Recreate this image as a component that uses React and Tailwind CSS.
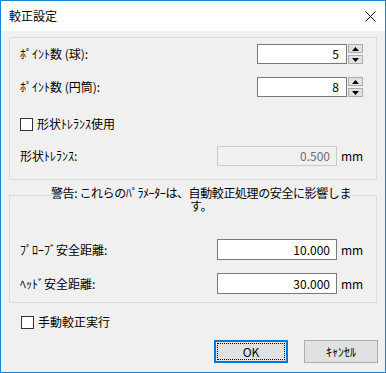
import React from "react";

const font = { fontFamily: '"Noto Sans CJK JP", "Noto Sans", sans-serif' };

const Spinner = ({ value }) => (
  <div className="flex items-center gap-[1px] mr-[13px]">
    <div className="w-[90px] h-[20px] bg-white border border-[#7a7a7a] flex items-center justify-end pr-[7px] text-[12px] text-black">
      {value}
    </div>
    <div className="flex flex-col gap-[2px]">
      <div className="w-[15px] h-[9px] bg-[#e1e1e1] border border-[#adadad] flex items-center justify-center">
        <svg width="7" height="4" viewBox="0 0 7 4"><path d="M0 4h7L3.5 0z" fill="#000" /></svg>
      </div>
      <div className="w-[15px] h-[9px] bg-[#e1e1e1] border border-[#adadad] flex items-center justify-center">
        <svg width="7" height="4" viewBox="0 0 7 4"><path d="M0 0h7L3.5 4z" fill="#000" /></svg>
      </div>
    </div>
  </div>
);

const MmField = ({ value, disabled }) => (
  <div className="flex items-center mr-[15px]">
    <div
      className={
        disabled
          ? "w-[120px] h-[20px] bg-[#f0f0f0] border border-[#cccccc] flex items-center justify-end pr-[6px] text-[12px] text-[#6d6d6d]"
          : "w-[120px] h-[21px] bg-white border border-[#7a7a7a] flex items-center justify-end pr-[6px] text-[12px] text-black"
      }
    >
      {value}
    </div>
    <span className="w-[24px] pl-[4px] text-[12px] text-black">mm</span>
  </div>
);

const Check = ({ label }) => (
  <div className="flex items-center gap-[4px]">
    <div className="w-[13px] h-[13px] bg-white border border-[#333333]" />
    <span className="text-[12px] text-black">{label}</span>
  </div>
);

export default function App() {
  return (
    <div
      className="w-[386px] h-[373px] border border-[#1883d7] bg-[#f0f0f0] flex flex-col"
      style={font}
    >
      {/* Title bar */}
      <div className="h-[30px] bg-white flex items-center justify-between pl-[8px] pr-[9px]">
        <span className="text-[12px] text-black">較正設定</span>
        <svg width="11" height="11" viewBox="0 0 11 11">
          <path d="M0.5 0.5L10.5 10.5M10.5 0.5L0.5 10.5" stroke="#111" strokeWidth="1" />
        </svg>
      </div>

      <div className="flex flex-col pl-[8px] pr-[8px]">
        {/* Group 1 */}
        <div className="mt-[6px] h-[143px] border border-[#dcdcdc] flex flex-col pl-[10px]">
          <div className="mt-[6px] h-[20px] flex items-center justify-between">
            <span className="text-[12px] text-black">ﾎﾟｲﾝﾄ数 (球):</span>
            <Spinner value="5" />
          </div>
          <div className="mt-[13px] h-[20px] flex items-center justify-between">
            <span className="text-[12px] text-black">ﾎﾟｲﾝﾄ数 (円筒):</span>
            <Spinner value="8" />
          </div>
          <div className="mt-[17px] h-[20px] flex items-center">
            <Check label="形状ﾄﾚﾗﾝｽ使用" />
          </div>
          <div className="mt-[12px] h-[20px] flex items-center justify-between">
            <span className="text-[12px] text-black">形状ﾄﾚﾗﾝｽ:</span>
            <MmField value="0.500" disabled />
          </div>
        </div>

        {/* Group 2 */}
        <div className="relative mt-[15px] h-[108px] border border-[#dcdcdc] flex flex-col pl-[10px]">
          <div className="absolute left-[42px] top-[-11px] w-[298px] bg-[#f0f0f0] flex flex-col items-center text-[12px] leading-[15px] text-black tracking-[-0.4px]">
            <span className="whitespace-nowrap">警告: これらのﾊﾟﾗﾒｰﾀｰは、自動較正処理の安全に影響しま</span>
            <span className="whitespace-nowrap -mt-[2px]">す。</span>
          </div>
          <div className="mt-[43px] h-[21px] flex items-center justify-between">
            <span className="text-[12px] text-black">ﾌﾟﾛｰﾌﾞ安全距離:</span>
            <MmField value="10.000" />
          </div>
          <div className="mt-[13px] h-[21px] flex items-center justify-between">
            <span className="text-[12px] text-black">ﾍｯﾄﾞ安全距離:</span>
            <MmField value="30.000" />
          </div>
        </div>

        <div className="mt-[12px] pl-[12px] h-[14px] flex items-center">
          <Check label="手動較正実行" />
        </div>

        <div className="mt-[11px] flex justify-end gap-[16px] mr-[-1px]">
          <div className="w-[74px] h-[23px] border-2 border-[#0078d7] bg-[#e1e1e1] p-[1px]">
            <div className="w-full h-full border border-dotted border-black flex items-center justify-center text-[12px] text-black">
              OK
            </div>
          </div>
          <div className="w-[74px] h-[23px] border border-[#adadad] bg-[#e1e1e1] flex items-center justify-center text-[12px] text-black">
            ｷｬﾝｾﾙ
          </div>
        </div>
      </div>
    </div>
  );
}
